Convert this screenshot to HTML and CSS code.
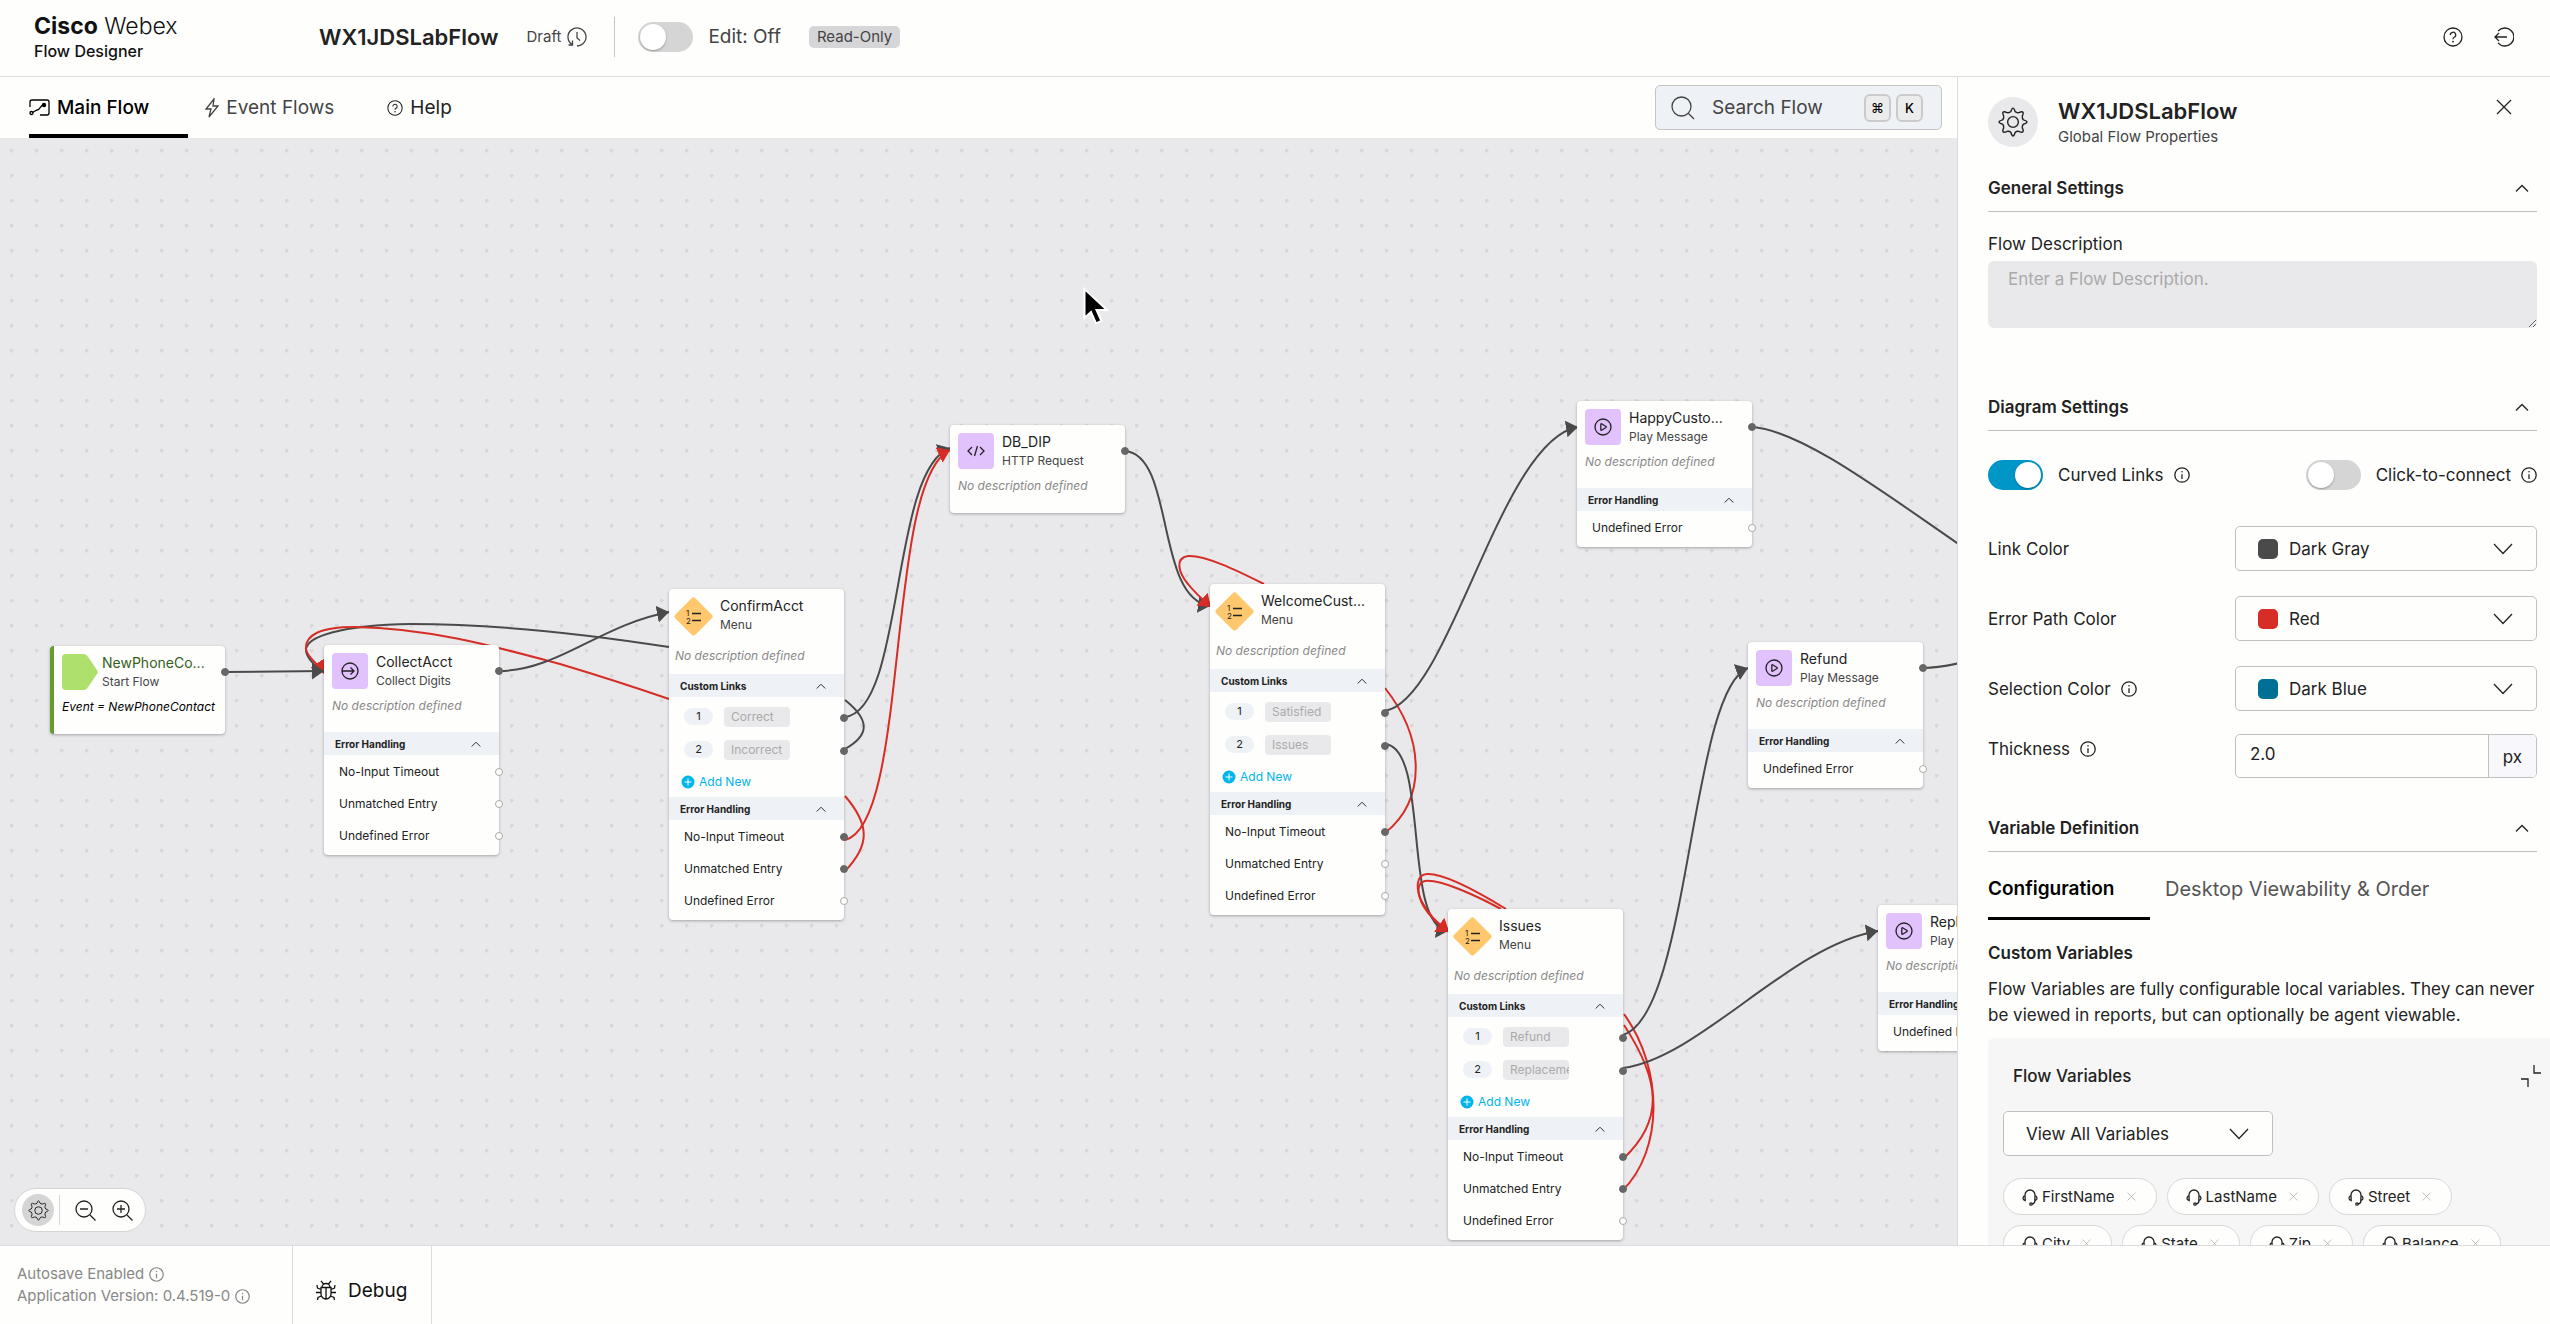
FILE: index.html
```html
<!DOCTYPE html>
<html lang="en">

	<head>
		<meta charset="UTF-8">
		<title>WX1JDSLabFlow</title>
		<link rel="stylesheet" href="styles.css">
	</head>

	<body>
		<!-- shared icons -->
		<svg class="sprite" aria-hidden="true">
			<symbol id="i-help" viewBox="0 0 20 20">
				<circle cx="10" cy="10" r="9" />
				<path d="M7.3 8a2.7 2.7 0 1 1 4 2.3c-.9.5-1.3 1-1.3 1.9" />
				<circle class="fill" cx="10" cy="14.6" r=".9" />
			</symbol>
			<symbol id="i-info" viewBox="0 0 16 16">
				<circle cx="8" cy="8" r="7.2" />
				<path d="M8 7.2V12" />
				<circle class="fill" cx="8" cy="4.8" r=".8" />
			</symbol>
			<symbol id="i-up" viewBox="0 0 14 8">
				<path d="M1 7.5l6-6 6 6" />
			</symbol>
			<symbol id="i-down" viewBox="0 0 20 12">
				<path d="M1 1l9 9.5L19 1" />
			</symbol>
			<symbol id="i-close" viewBox="0 0 16 16">
				<path d="M1 1l14 14M15 1L1 15" />
			</symbol>
			<symbol id="i-gear" viewBox="0 0 28 28">
				<path d="M12 4.2 Q13 1 14 1 Q15 1 16 4.2 Q17.200 5.600 19.500 5.300 Q22.500 3.900 23.200 4.800 Q24.100 5.500 22.700 8.500 Q22.400 10.800 23.800 12 Q27 13 27 14 Q27 15 23.800 16 Q22.400 17.200 22.700 19.500 Q24.100 22.500 23.200 23.200 Q22.500 24.100 19.500 22.700 Q17.200 22.400 16 23.800 Q15 27 14 27 Q13 27 12 23.800 Q10.800 22.400 8.500 22.700 Q5.500 24.100 4.800 23.200 Q3.900 22.500 5.300 19.500 Q5.600 17.200 4.200 16 Q1 15 1 14 Q1 13 4.200 12 Q5.600 10.800 5.300 8.500 Q3.900 5.500 4.800 4.800 Q5.500 3.900 8.500 5.300 Q10.800 5.600 12 4.200z" />
				<circle cx="14" cy="14" r="5" />
			</symbol>
			<symbol id="i-agent" viewBox="0 0 16 18">
				<path d="M3 9V7a5 5 0 0 1 10 0v2M3 7.500C1.500 8 1 9 1 10.200s.8 2.200 2.200 2.500zM13 7.500c1.500.5 2 1.500 2 2.700s-.8 2.200-2.200 2.500zM13 12.500c0 2-1.500 3.300-3.200 3.500" />
				<circle cx="9" cy="16" r="1.200" />
			</symbol>
			<symbol id="i-play" viewBox="0 0 18 18">
				<circle cx="9" cy="9" r="8" />
				<path d="M6.800 6.300v5.400c0 .5.400.7.800.5l4.400-2.700c.4-.3.4-.7 0-1L7.600 5.800c-.4-.2-.8 0-.8.500z" />
			</symbol>
			<symbol id="i-menu" viewBox="0 0 39 39">
				<path class="diamond" d="M17.400 1.400a3 3 0 0 1 4.200 0l16 16a3 3 0 0 1 0 4.200l-16 16a3 3 0 0 1-4.200 0l-16-16a3 3 0 0 1 0-4.200z" />
				<path d="M18 16.500h9M18 23.500h9" />
			</symbol>
			<symbol id="i-plus" viewBox="0 0 14 14">
				<circle class="disc" cx="7" cy="7" r="6.500" />
				<path d="M7 3.500v7M3.500 7h7" />
			</symbol>
		</svg>

		<header class="topbar">
			<div class="brand">
				<div class="brand-name"><b>Cisco</b> Webex</div>
				<div class="brand-app">Flow Designer</div>
			</div>
			<h1>WX1JDSLabFlow</h1>
			<span class="draft">Draft
				<svg class="icon" width="20" height="20" viewBox="0 0 20 20"><path d="M5 17.500A9 9 0 1 1 10 19M5.500 13.500V18H1.500M10 5v6l3 2.500" /></svg>
			</span>
			<label class="edit">
				<input class="switch" type="checkbox">
				<span>Edit: Off</span>
			</label>
			<span class="badge">Read-Only</span>
			<div class="top-actions">
				<button type="button" aria-label="Help"><svg class="icon" width="20" height="20"><use href="#i-help" /></svg></button>
				<button type="button" aria-label="Sign out"><svg class="icon" width="20" height="20" viewBox="0 0 20 20"><path d="M4 4.200A9 9 0 1 1 4 15.800M1 10h12M5 6l-4 4 4 4" /></svg></button>
			</div>
		</header>

		<main>
			<div class="workspace">
				<nav class="tabs">
					<a class="now" href="#main">
						<svg class="icon" width="21" height="17" viewBox="0 0 21 17"><path d="M1 8V3a2 2 0 0 1 2-2h15a2 2 0 0 1 2 2v11a2 2 0 0 1-2 2h-7M3.500 13.500L8 11c3 0 3-5 7-5" /><circle cx="2.500" cy="14" r="1.500" /><circle class="fill" cx="15" cy="6" r="2.200" /></svg>
						Main Flow
					</a>
					<a href="#events">
						<svg class="icon" width="14" height="20" viewBox="0 0 14 20"><path d="M9 1L1 11h5l-2 8 9-11H8z" /></svg>
						Event Flows
					</a>
					<a class="help" href="#help">
						<svg class="icon" width="16" height="16"><use href="#i-help" /></svg>
						Help
					</a>
					<button class="search" type="button">
						<svg class="icon" width="24" height="24" viewBox="0 0 24 24"><circle cx="10.500" cy="10.500" r="9.500" /><path d="M17.500 17.500L23 23" /></svg>
						<span>Search Flow</span>
						<kbd>⌘</kbd>
						<kbd>K</kbd>
					</button>
				</nav>

				<div class="canvas">
					<svg class="links">
						<defs>
							<marker id="head" markerUnits="userSpaceOnUse" markerWidth="14" markerHeight="18" refX="12" refY="8.500" orient="auto"><path d="M0 0l12 8.500L0 17z" /></marker>
							<marker id="head-err" markerUnits="userSpaceOnUse" markerWidth="14" markerHeight="18" refX="12" refY="8.500" orient="auto"><path d="M0 0l12 8.500L0 17z" /></marker>
						</defs>
						<g transform="translate(0 -138)">
							<path d="M845 749C870 735 870 720 845 700" />
							<path d="M669 647C560 630 480 624 411 624C340 625 306 637 306 650C306 658 315 666 324 673" />
							<path class="err" d="M845 871C870 845 870 825 845 796" />
							<path class="err to" d="M669 699C640 689 600 676 560 664C500 648 430 628 355 627C320 627 305 635 306 649C307 657 318 664 324 673" />
							<!-- drawn after the error path so its head stays on top -->
							<path class="to" d="M225 672L324 671" />
							<path class="to" d="M499 671C557 671 600 625 669 612" />
							<path class="to" d="M845 717C905 710 890 470 950 448" />
							<path class="err to" d="M845 840C910 825 885 480 950 450" />
							<path class="to" d="M1125 451C1175 455 1155 598 1210 606" />
							<path class="err" d="M1385 833C1426 800 1426 740 1385 688" />
							<path class="err to" d="M1264 584C1236 570 1205 555 1188 556C1175 558 1178 572 1188 584C1195 593 1203 600 1211 607" />
							<path class="to" d="M1385 711C1450 700 1500 440 1578 427" />
							<path class="to" d="M1385 744C1430 748 1402 925 1448 931" />
							<path class="err" d="M1623 1159C1665 1120 1660 1080 1624 1025M1623 1190C1663 1150 1664 1070 1624 1014" />
							<path class="err to" d="M1506 909C1480 893 1445 873 1427 874C1415 875 1416 890 1422 902C1428 914 1438 924 1449 932" />
							<path class="err to" d="M1501 909C1475 895 1440 879 1425 881C1416 883 1417 895 1424 907C1430 917 1438 924 1449 932" />
							<path d="M1752 427C1800 430 1880 490 1960 545" />
							<path d="M1924 668C1935 668 1946 666 1960 663" />
							<path class="to" d="M1623 1035C1690 1015 1690 690 1748 668" />
							<path class="to" d="M1623 1068C1700 1058 1790 945 1878 931" />
						</g>
					</svg>

					<article class="node start" style="left:50px;top:508px">
						<div class="node-head">
							<svg class="shape" width="36" height="36" viewBox="0 0 36 36"><path d="M4 0h18c1 0 2 .5 3 1.500L35 16c1 1.500 1 2.500 0 4L25 34.500c-1 1-2 1.500-3 1.500H4a4 4 0 0 1-4-4V4a4 4 0 0 1 4-4z" /></svg>
							<div><h2>NewPhoneCo...</h2><p>Start Flow</p></div>
							<i class="port on"></i>
						</div>
						<p class="desc">Event = NewPhoneContact</p>
					</article>

					<article class="node" style="left:324px;top:507px">
						<div class="node-head">
							<span class="tile"><svg class="icon" width="18" height="18" viewBox="0 0 18 18"><circle cx="9" cy="9" r="8" /><path d="M1 9h12M9.500 5.500L13 9l-3.500 3.500" /></svg></span>
							<div><h2>CollectAcct</h2><p>Collect Digits</p></div>
							<i class="port on"></i>
						</div>
						<p class="desc">No description defined</p>
						<h3>Error Handling <svg class="icon" width="10" height="6"><use href="#i-up" /></svg></h3>
						<ul>
							<li>No-Input Timeout<i class="port"></i></li>
							<li>Unmatched Entry<i class="port"></i></li>
							<li>Undefined Error<i class="port"></i></li>
						</ul>
					</article>

					<article class="node menu" style="left:669px;top:451px">
						<div class="node-head">
							<svg class="icon" width="39" height="39" viewBox="0 0 39 39"><use href="#i-menu" /><text x="12" y="19">1</text><text x="12" y="27">2</text></svg>
							<div><h2>ConfirmAcct</h2><p>Menu</p></div>
						</div>
						<p class="desc">No description defined</p>
						<h3>Custom Links <svg class="icon" width="10" height="6"><use href="#i-up" /></svg></h3>
						<ul class="custom">
							<li><b>1</b><input type="text" value="Correct" aria-label="Link 1" disabled><i class="port on"></i></li>
							<li><b>2</b><input type="text" value="Incorrect" aria-label="Link 2" disabled><i class="port on"></i></li>
						</ul>
						<button class="add" type="button"><svg width="14" height="14"><use href="#i-plus" /></svg>Add New</button>
						<h3>Error Handling <svg class="icon" width="10" height="6"><use href="#i-up" /></svg></h3>
						<ul>
							<li>No-Input Timeout<i class="port on"></i></li>
							<li>Unmatched Entry<i class="port on"></i></li>
							<li>Undefined Error<i class="port"></i></li>
						</ul>
					</article>

					<article class="node" style="left:950px;top:287px">
						<div class="node-head">
							<span class="tile"><svg class="icon" width="18" height="12" viewBox="0 0 18 12"><path d="M5 2L1 6l4 4M13 2l4 4-4 4M10.500 1l-3 10" /></svg></span>
							<div><h2>DB_DIP</h2><p>HTTP Request</p></div>
							<i class="port on"></i>
						</div>
						<p class="desc">No description defined</p>
					</article>

					<article class="node menu" style="left:1210px;top:446px">
						<div class="node-head">
							<svg class="icon" width="39" height="39" viewBox="0 0 39 39"><use href="#i-menu" /><text x="12" y="19">1</text><text x="12" y="27">2</text></svg>
							<div><h2>WelcomeCust...</h2><p>Menu</p></div>
						</div>
						<p class="desc">No description defined</p>
						<h3>Custom Links <svg class="icon" width="10" height="6"><use href="#i-up" /></svg></h3>
						<ul class="custom">
							<li><b>1</b><input type="text" value="Satisfied" aria-label="Link 1" disabled><i class="port on"></i></li>
							<li><b>2</b><input type="text" value="Issues" aria-label="Link 2" disabled><i class="port on"></i></li>
						</ul>
						<button class="add" type="button"><svg width="14" height="14"><use href="#i-plus" /></svg>Add New</button>
						<h3>Error Handling <svg class="icon" width="10" height="6"><use href="#i-up" /></svg></h3>
						<ul>
							<li>No-Input Timeout<i class="port on"></i></li>
							<li>Unmatched Entry<i class="port"></i></li>
							<li>Undefined Error<i class="port"></i></li>
						</ul>
					</article>

					<article class="node" style="left:1577px;top:263px">
						<div class="node-head">
							<span class="tile"><svg class="icon" width="18" height="18"><use href="#i-play" /></svg></span>
							<div><h2>HappyCusto...</h2><p>Play Message</p></div>
							<i class="port on"></i>
						</div>
						<p class="desc">No description defined</p>
						<h3>Error Handling <svg class="icon" width="10" height="6"><use href="#i-up" /></svg></h3>
						<ul>
							<li>Undefined Error<i class="port"></i></li>
						</ul>
					</article>

					<article class="node" style="left:1748px;top:504px">
						<div class="node-head">
							<span class="tile"><svg class="icon" width="18" height="18"><use href="#i-play" /></svg></span>
							<div><h2>Refund</h2><p>Play Message</p></div>
							<i class="port on"></i>
						</div>
						<p class="desc">No description defined</p>
						<h3>Error Handling <svg class="icon" width="10" height="6"><use href="#i-up" /></svg></h3>
						<ul>
							<li>Undefined Error<i class="port"></i></li>
						</ul>
					</article>

					<article class="node menu" style="left:1448px;top:771px">
						<div class="node-head">
							<svg class="icon" width="39" height="39" viewBox="0 0 39 39"><use href="#i-menu" /><text x="12" y="19">1</text><text x="12" y="27">2</text></svg>
							<div><h2>Issues</h2><p>Menu</p></div>
						</div>
						<p class="desc">No description defined</p>
						<h3>Custom Links <svg class="icon" width="10" height="6"><use href="#i-up" /></svg></h3>
						<ul class="custom">
							<li><b>1</b><input type="text" value="Refund" aria-label="Link 1" disabled><i class="port on"></i></li>
							<li><b>2</b><input type="text" value="Replacement" aria-label="Link 2" disabled><i class="port on"></i></li>
						</ul>
						<button class="add" type="button"><svg width="14" height="14"><use href="#i-plus" /></svg>Add New</button>
						<h3>Error Handling <svg class="icon" width="10" height="6"><use href="#i-up" /></svg></h3>
						<ul>
							<li>No-Input Timeout<i class="port on"></i></li>
							<li>Unmatched Entry<i class="port on"></i></li>
							<li>Undefined Error<i class="port"></i></li>
						</ul>
					</article>

					<article class="node" style="left:1878px;top:767px">
						<div class="node-head">
							<span class="tile"><svg class="icon" width="18" height="18"><use href="#i-play" /></svg></span>
							<div><h2>Replacement</h2><p>Play Message</p></div>
							<i class="port on"></i>
						</div>
						<p class="desc">No description defined</p>
						<h3>Error Handling <svg class="icon" width="10" height="6"><use href="#i-up" /></svg></h3>
						<ul>
							<li>Undefined Error<i class="port"></i></li>
						</ul>
					</article>

					<svg class="pointer" width="26" height="38" viewBox="0 0 26 38"><path d="M1.500 2v29l6.500-6 5 11.500 5.500-2.500-5-11H24z" /></svg>

					<div class="zoombar">
						<button class="gear" type="button" aria-label="Settings"><svg class="icon" width="21" height="21"><use href="#i-gear" /></svg></button>
						<button type="button" aria-label="Zoom out"><svg class="icon" width="21" height="21" viewBox="0 0 21 21"><circle cx="9" cy="9" r="8" /><path d="M15 15l5.500 5.500M5 9h8" /></svg></button>
						<button type="button" aria-label="Zoom in"><svg class="icon" width="21" height="21" viewBox="0 0 21 21"><circle cx="9" cy="9" r="8" /><path d="M15 15l5.500 5.500M5 9h8M9 5v8" /></svg></button>
					</div>
				</div>
			</div>

			<aside>
				<div class="panel-head">
					<span class="gear-badge"><svg class="icon" width="30" height="30"><use href="#i-gear" /></svg></span>
					<div>
						<h2>WX1JDSLabFlow</h2>
						<p>Global Flow Properties</p>
					</div>
					<button type="button" aria-label="Close"><svg class="icon" width="16" height="16"><use href="#i-close" /></svg></button>
				</div>

				<h3>General Settings <svg class="icon" width="14" height="8"><use href="#i-up" /></svg></h3>
				<section class="general">
					<label for="description">Flow Description</label>
					<textarea id="description" placeholder="Enter a Flow Description."></textarea>
				</section>

				<h3>Diagram Settings <svg class="icon" width="14" height="8"><use href="#i-up" /></svg></h3>
				<section>
					<div class="toggles">
						<label><input class="switch" type="checkbox" checked> Curved Links <svg class="icon" width="16" height="16"><use href="#i-info" /></svg></label>
						<label><input class="switch" type="checkbox"> Click-to-connect <svg class="icon" width="16" height="16"><use href="#i-info" /></svg></label>
					</div>
					<div class="field">
						<label for="link-color">Link Color</label>
						<div class="select">
							<span class="swatch gray"></span>
							<select id="link-color"><option>Dark Gray</option></select>
							<svg class="icon" width="20" height="12"><use href="#i-down" /></svg>
						</div>
					</div>
					<div class="field">
						<label for="error-color">Error Path Color</label>
						<div class="select">
							<span class="swatch red"></span>
							<select id="error-color"><option>Red</option></select>
							<svg class="icon" width="20" height="12"><use href="#i-down" /></svg>
						</div>
					</div>
					<div class="field">
						<label for="selection-color">Selection Color <svg class="icon" width="16" height="16"><use href="#i-info" /></svg></label>
						<div class="select">
							<span class="swatch blue"></span>
							<select id="selection-color"><option>Dark Blue</option></select>
							<svg class="icon" width="20" height="12"><use href="#i-down" /></svg>
						</div>
					</div>
					<div class="field thickness">
						<label for="thickness">Thickness <svg class="icon" width="16" height="16"><use href="#i-info" /></svg></label>
						<div class="unit">
							<input id="thickness" type="text" value="2.0">
							<span>px</span>
						</div>
					</div>
				</section>

				<h3>Variable Definition <svg class="icon" width="14" height="8"><use href="#i-up" /></svg></h3>
				<section class="variables">
					<nav>
						<a class="now" href="#configuration">Configuration</a>
						<a href="#desktop">Desktop Viewability &amp; Order</a>
					</nav>
					<h4>Custom Variables</h4>
					<p>Flow Variables are fully configurable local variables. They can never be viewed in reports, but can optionally be agent viewable.</p>
					<div class="box">
						<h5>Flow Variables <svg class="icon" width="20" height="23" viewBox="0 0 20 23"><path d="M13 0v8h7M0 14h7v8" /></svg></h5>
						<div class="select">
							<select aria-label="Variable filter"><option>View All Variables</option></select>
							<svg class="icon" width="20" height="12"><use href="#i-down" /></svg>
						</div>
						<div class="chips">
							<span class="chip"><svg class="icon" width="16" height="18"><use href="#i-agent" /></svg>FirstName<button type="button" aria-label="Remove FirstName"><svg class="icon" width="9" height="9"><use href="#i-close" /></svg></button></span>
							<span class="chip"><svg class="icon" width="16" height="18"><use href="#i-agent" /></svg>LastName<button type="button" aria-label="Remove LastName"><svg class="icon" width="9" height="9"><use href="#i-close" /></svg></button></span>
							<span class="chip"><svg class="icon" width="16" height="18"><use href="#i-agent" /></svg>Street<button type="button" aria-label="Remove Street"><svg class="icon" width="9" height="9"><use href="#i-close" /></svg></button></span>
							<span class="chip"><svg class="icon" width="16" height="18"><use href="#i-agent" /></svg>City<button type="button" aria-label="Remove City"><svg class="icon" width="9" height="9"><use href="#i-close" /></svg></button></span>
							<span class="chip"><svg class="icon" width="16" height="18"><use href="#i-agent" /></svg>State<button type="button" aria-label="Remove State"><svg class="icon" width="9" height="9"><use href="#i-close" /></svg></button></span>
							<span class="chip"><svg class="icon" width="16" height="18"><use href="#i-agent" /></svg>Zip<button type="button" aria-label="Remove Zip"><svg class="icon" width="9" height="9"><use href="#i-close" /></svg></button></span>
							<span class="chip"><svg class="icon" width="16" height="18"><use href="#i-agent" /></svg>Balance<button type="button" aria-label="Remove Balance"><svg class="icon" width="9" height="9"><use href="#i-close" /></svg></button></span>
						</div>
					</div>
				</section>
			</aside>
		</main>

		<footer>
			<div class="status">
				<p>Autosave Enabled <svg class="icon" width="15" height="15"><use href="#i-info" /></svg></p>
				<p>Application Version: 0.4.519-0 <svg class="icon" width="15" height="15"><use href="#i-info" /></svg></p>
			</div>
			<button class="debug" type="button">
				<svg class="icon" width="20" height="21" viewBox="0 0 20 21"><path d="M5 7.500h10V14a5 5 0 0 1-10 0zM6 7.500a4 4 0 0 1 8 0M10 7.500V19M7.500 4L5 .8M12.500 4L15 .8M5 9.500L1.500 8 1 5M15 9.500L18.500 8l.5-3M5 12.500H0M15 12.500h5M5.500 16L2 17.500 1.500 20M14.500 16l3.500 1.500.5 2.500" /></svg>
				Debug
			</button>
		</footer>
	</body>

</html>
```
FILE: styles.css
```css
* {
	box-sizing: border-box;
}

body {
	margin: 0;
	height: 100vh;
	display: flex;
	flex-direction: column;
	overflow: hidden;
	background: #fefefd;
	color: #222;
	font-family: Inter, "Liberation Sans", sans-serif;
	font-size: 17px;
}

h1, h2, h3, h4, h5, p, ul {
	margin: 0;
	padding: 0;
}

ul {
	list-style: none;
}

a {
	color: inherit;
	text-decoration: none;
}

button {
	padding: 0;
	border: 0;
	background: none;
	color: inherit;
	font: inherit;
	display: flex;
	align-items: center;
}

.sprite {
	width: 0;
	height: 0;
	position: absolute;
}

.icon {
	flex: none;
	fill: none;
	stroke: currentColor;
	stroke-width: 1.3;
}

.fill {
	fill: currentColor;
	stroke: none;
}

/* top bar */

.topbar {
	flex: none;
	height: 77px;
	padding: 0 36px 3px 34px;
	display: flex;
	align-items: center;
	border-bottom: 1px solid #dcdce0;
}

.brand {
	width: 285px;
	color: #111;
}

.brand-name {
	font-size: 23px;
	font-weight: 300;
	line-height: 28px;
}

.brand-name b {
	font-weight: 700;
}

.brand-app {
	font-size: 16px;
	font-weight: 500;
	line-height: 22px;
}

h1,
.panel-head h2 {
	font-size: 22px;
	font-weight: 600;
	line-height: 28px;
}

.draft {
	height: 40px;
	margin-left: 28px;
	padding-right: 27px;
	display: flex;
	align-items: center;
	gap: 6px;
	border-right: 1px solid #c4c4c6;
	font-size: 15px;
	color: #444;
}

.edit {
	margin-left: 23px;
	display: flex;
	align-items: center;
	gap: 15px;
	font-size: 19px;
	color: #444;
}

.switch {
	appearance: none;
	flex: none;
	width: 55px;
	height: 30px;
	margin: 0;
	padding: 2px;
	display: flex;
	border-radius: 15px;
	background: #d5d5d6;
}

.switch::before {
	content: "";
	width: 26px;
	height: 26px;
	border-radius: 50%;
	background: #fff;
	box-shadow: 0 1px 2px rgba(0, 0, 0, .3);
}

.switch:checked {
	justify-content: flex-end;
	background: #0096c7;
}

.badge {
	margin-left: 28px;
	padding: 0 8px;
	border-radius: 5px;
	background: #d6d6d8;
	font-size: 15px;
	line-height: 22px;
	color: #444;
}

.top-actions {
	margin-left: auto;
	display: flex;
	gap: 31px;
}

/* workspace */

main {
	flex: 1;
	min-height: 0;
	display: flex;
}

.workspace {
	flex: 1;
	min-width: 0;
	display: flex;
	flex-direction: column;
}

.tabs {
	flex: none;
	height: 61px;
	padding: 0 15px 0 29px;
	display: flex;
	align-items: center;
	font-size: 19px;
	color: #444;
}

.tabs a {
	height: 61px;
	padding-right: 39px;
	display: flex;
	align-items: center;
	gap: 7px;
}

.tabs .now {
	margin-right: 17px;
	border-bottom: 4px solid #000;
	padding-top: 4px;
	font-weight: 500;
	color: #000;
}

.tabs .help {
	margin-left: 14px;
	color: #222;
}

.search {
	width: 287px;
	height: 45px;
	margin-left: auto;
	padding: 0 18px 0 15px;
	gap: 5px;
	border: 1px solid #c4c4c6;
	border-radius: 5px;
	background: #eef1f5;
}

.search span {
	flex: 1;
	padding-left: 12px;
	text-align: left;
}

kbd {
	width: 27px;
	height: 28px;
	border: 2px solid #cbcbcb;
	border-radius: 6px;
	background: #ececec;
	font: 500 13px/24px Inter, "DejaVu Sans", sans-serif;
	color: #000;
	text-align: center;
}

.canvas {
	flex: 1;
	position: relative;
	overflow: hidden;
	background: #e9e9eb radial-gradient(#d8d8da 2px, transparent 2px) -1px 0 / 25px 25px;
}

.links {
	width: 100%;
	height: 100%;
	position: absolute;
	top: 0;
	left: 0;
}

.links g path {
	fill: none;
	stroke: #4a4a4b;
	stroke-width: 2;
}

.links g .err {
	stroke: #d62d26;
}

.to {
	marker-end: url(#head);
}

.err.to {
	marker-end: url(#head-err);
}

#head path {
	fill: #4a4a4b;
}

#head-err path {
	fill: #d62d26;
}

/* nodes */

.node {
	width: 175px;
	min-height: 88px;
	position: absolute;
	border-radius: 4px;
	background: #fefefd;
	box-shadow: 0 1px 3px rgba(0, 0, 0, .3);
	font-size: 12px;
}

.node-head {
	height: 52px;
	padding: 8px 8px 0;
	position: relative;
	display: flex;
	gap: 8px;
}

.node h2 {
	font-size: 14px;
	font-weight: 400;
	line-height: 18px;
}

.node p {
	line-height: 20px;
	color: #444;
}

.tile {
	width: 36px;
	height: 36px;
	display: flex;
	align-items: center;
	justify-content: center;
	border-radius: 4px;
	background: #e2c2fd;
}

.node .desc {
	height: 35px;
	padding-left: 8px;
	font-style: italic;
	line-height: 18px;
	color: #888;
}

.node h3 {
	height: 23px;
	padding: 0 18px 0 11px;
	display: flex;
	align-items: center;
	justify-content: space-between;
	background: #eef1f5;
	font-size: 10px;
	font-weight: 700;
}

.node ul {
	padding-bottom: 4px;
}

.node li {
	height: 32px;
	padding-left: 15px;
	position: relative;
	display: flex;
	align-items: center;
}

.node .custom {
	padding: 3px 0 0;
}

.node .custom li {
	height: 33px;
	gap: 11px;
}

.custom b {
	width: 29px;
	border-radius: 9px;
	background: #eef1f5;
	font-size: 11px;
	font-weight: 400;
	line-height: 17px;
	text-align: center;
}

.custom input {
	width: 66px;
	height: 20px;
	padding: 0 0 0 7px;
	border: 0;
	border-radius: 4px;
	background: #e9e9eb;
	font: 12px Inter, "Liberation Sans", sans-serif;
	color: #aaa;
}

.add {
	height: 31px;
	padding-left: 12px;
	gap: 4px;
	color: #00b5ea;
}

.disc {
	fill: #00b5ea;
}

#i-plus path {
	stroke: #fff;
}

.port {
	width: 8px;
	height: 8px;
	position: absolute;
	top: 50%;
	right: -4px;
	margin-top: -3px;
	border: 1px solid #aaa;
	border-radius: 50%;
	background: #fefefd;
}

.port.on {
	border-color: #666;
	background: #666;
}

.node-head .port {
	margin-top: -4px;
}

.menu .node-head {
	padding-left: 5px;
	gap: 7px;
}

.menu .desc {
	height: 33px;
	padding: 6px 0 0 6px;
}

.diamond {
	fill: #ffc76e;
	stroke: none;
}

.menu text {
	fill: #222;
	stroke: none;
	font-size: 8px;
}

.start {
	padding-left: 4px;
	border-left: 4px solid #649c2e;
}

.start .node-head {
	padding-left: 4px;
	gap: 4px;
}

.start h2 {
	color: #35601c;
}

.start .desc {
	padding-left: 4px;
	color: #000;
}

.shape {
	flex: none;
	fill: #aee06c;
}

.pointer {
	position: absolute;
	top: 149px;
	left: 1083px;
	stroke: #fff;
	stroke-width: 2;
}

.zoombar {
	height: 44px;
	padding: 0 12px 0 7px;
	position: absolute;
	bottom: 13px;
	left: 14px;
	display: flex;
	align-items: center;
	gap: 16px;
	border: 1px solid #d5d5d6;
	border-radius: 22px;
	background: #fefefd;
}

.zoombar .gear {
	width: 32px;
	height: 32px;
	justify-content: center;
	border-radius: 50%;
	background: #d5d5d6;
}

.zoombar .gear + button {
	height: 30px;
	margin-left: -11px;
	padding-left: 15px;
	border-left: 1px solid #d5d5d6;
}

/* properties panel */

aside {
	flex: none;
	width: 593px;
	padding: 20px 13px 0 30px;
	overflow: hidden;
	border-left: 1px solid #dcdce0;
}

.panel-head {
	margin-bottom: 28px;
	padding-right: 25px;
	display: flex;
	align-items: flex-start;
	gap: 20px;
}

.panel-head div {
	flex: 1;
}

.panel-head p {
	font-size: 15px;
	line-height: 24px;
	color: #444;
}

.panel-head button {
	margin-top: 2px;
}

.gear-badge {
	width: 50px;
	height: 50px;
	display: flex;
	align-items: center;
	justify-content: center;
	border-radius: 50%;
	background: #e9e9eb;
}

aside h3 {
	height: 35px;
	padding: 0 8px 12px 0;
	display: flex;
	align-items: center;
	justify-content: space-between;
	border-bottom: 1px solid #c0c0c2;
	font-size: 17px;
	font-weight: 600;
	line-height: 22px;
}

.general {
	padding: 20px 0 68px;
	display: flex;
	flex-direction: column;
	gap: 5px;
	line-height: 24px;
}

textarea {
	width: 100%;
	height: 67px;
	padding: 6px 20px;
	border: 0;
	border-radius: 6px;
	background: #e9e9eb;
	font: inherit;
	line-height: 24px;
}

textarea::placeholder {
	color: #aaa;
}

.toggles {
	padding: 29px 0 11px;
	display: flex;
	justify-content: space-between;
}

.toggles label {
	display: flex;
	align-items: center;
	gap: 10px;
}

.toggles .switch {
	margin-right: 5px;
}

.field {
	margin-top: 25px;
	display: flex;
	align-items: center;
	justify-content: space-between;
}

.field label {
	display: flex;
	align-items: center;
	gap: 10px;
}

.select {
	height: 45px;
	padding: 0 23px 0 22px;
	display: flex;
	align-items: center;
	border: 1px solid #c0c0c2;
	border-radius: 5px;
	background: #fefefd;
}

.field .select,
.unit {
	width: 302px;
}

select {
	appearance: none;
	flex: 1;
	padding: 0;
	border: 0;
	background: none;
	font: inherit;
	color: inherit;
}

.swatch {
	width: 20px;
	height: 20px;
	margin-right: 11px;
	border-radius: 5px;
}

.swatch.gray {
	background: #4a4a4b;
}

.swatch.red {
	background: #d62d26;
}

.swatch.blue {
	background: #006f95;
}

.field.thickness {
	margin: 23px 0 39px;
}

.thickness label {
	padding-bottom: 14px;
}

.unit {
	height: 44px;
	display: flex;
	border: 1px solid #c0c0c2;
	border-radius: 5px;
	overflow: hidden;
}

.unit input {
	flex: 1;
	min-width: 0;
	padding: 0 14px 4px;
	border: 0;
	border-right: 1px solid #c0c0c2;
	background: none;
	font: inherit;
	color: inherit;
}

.unit span {
	width: 47px;
	background: #f8f8fc;
	line-height: 44px;
	text-align: center;
}

.variables nav {
	margin: 25px 0 21px;
	display: flex;
	gap: 15px;
	font-size: 20px;
	line-height: 24px;
	color: #555;
}

.variables nav a {
	padding-bottom: 19px;
}

.variables nav .now {
	width: 162px;
	padding-bottom: 16px;
	border-bottom: 3px solid #000;
	font-size: 19px;
	font-weight: 600;
	color: #000;
}

h4 {
	margin-bottom: 11px;
	font-weight: 600;
	line-height: 24px;
}

.variables p {
	line-height: 26px;
}

.box {
	margin: 10px -13px 0 0;
	padding: 26px 9px 20px 15px;
	border-radius: 6px 0 0 6px;
	background: #f6f6f6;
}

h5 {
	padding-left: 10px;
	display: flex;
	align-items: center;
	justify-content: space-between;
	font-size: 17px;
	font-weight: 500;
	line-height: 24px;
}

.box .select {
	width: 270px;
	margin: 23px 0 22px;
}

.chips {
	display: flex;
	flex-wrap: wrap;
	gap: 10px;
}

.chip {
	height: 37px;
	padding: 0 20px 0 18px;
	display: flex;
	align-items: center;
	gap: 4px;
	border: 1px solid #d8d8da;
	border-radius: 19px;
	background: #fefefd;
	font-size: 15px;
}

.chip button {
	margin-left: 8px;
	color: #aaa;
}

/* footer */

footer {
	flex: none;
	height: 79px;
	display: flex;
	border-top: 1px solid #dcdce0;
}

.status {
	width: 293px;
	padding: 17px 0 0 17px;
	border-right: 1px solid #dcdce0;
	font-size: 15px;
	line-height: 22px;
	color: #888;
}

.status p {
	display: flex;
	align-items: center;
	gap: 5px;
}

.debug {
	width: 139px;
	padding: 10px 0 0 23px;
	gap: 12px;
	border-right: 1px solid #dcdce0;
	font-size: 19px;
	color: #111;
}
```
